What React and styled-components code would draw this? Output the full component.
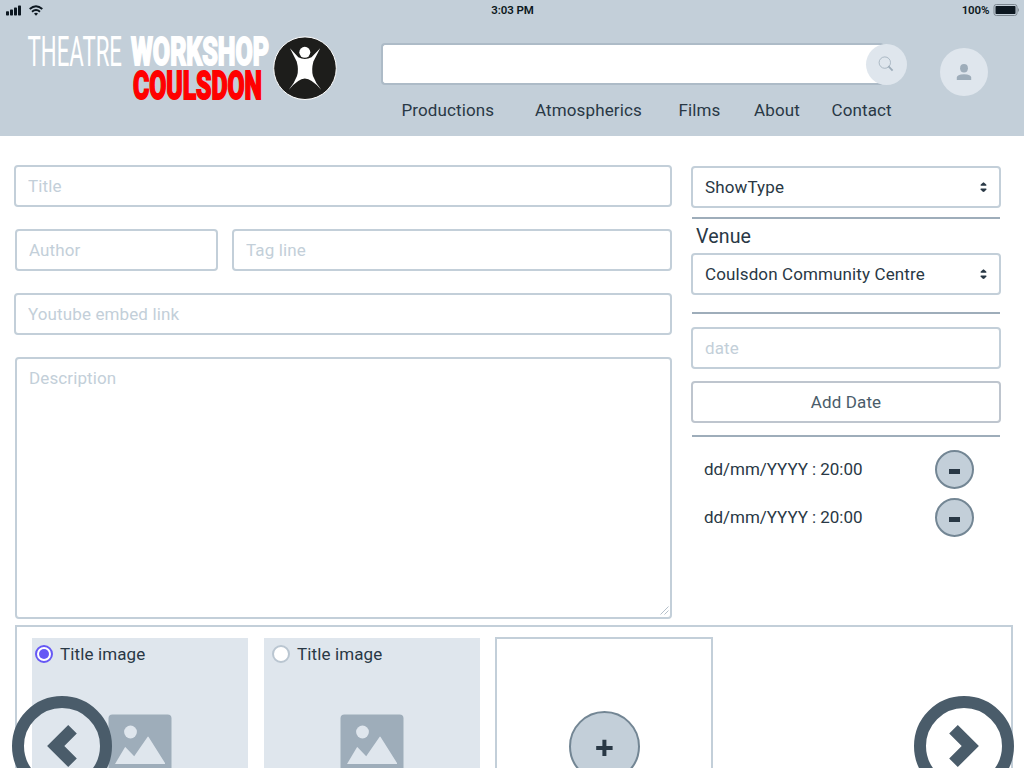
import React from "react";
import styled, { createGlobalStyle } from "styled-components";

const Global = createGlobalStyle`
  *, *::before, *::after { box-sizing: border-box; }
  body { margin: 0; background: #fff; }
  input, textarea, button { font: inherit; letter-spacing: inherit; color: inherit; }
`;

const Page = styled.div`
  width: 1024px;
  height: 768px;
  overflow: hidden;
  background: #fff;
  color: #293845;
  font: 400 17px/20px Roboto, "Liberation Sans", sans-serif;
  letter-spacing: 0.12px;
`;

const Header = styled.header`
  height: 136px;
  background: #c3cfd9;
`;

const StatusBar = styled.div`
  display: grid;
  grid-template-columns: 1fr auto 1fr;
  align-items: center;
  height: 20px;
  padding: 0 5px 0 6px;
  color: #0c1720;
  font-size: 11.5px;
  font-weight: 600;
  letter-spacing: -0.08px;
`;

const StatusGroup = styled.div`
  display: flex;
  align-items: center;
  justify-content: ${(p) => (p.$end ? "flex-end" : "flex-start")};
  gap: ${(p) => (p.$end ? 3.5 : 7)}px;
`;

const Brand = styled.div`
  display: flex;
  align-items: flex-start;
  height: 116px;
`;

const LogoSvg = styled.svg`
  display: block;
  flex: none;
  width: 381px;
  height: 116px;
`;

const SearchColumn = styled.div`
  width: 526px;
  padding-top: 23px;
`;

const SearchRow = styled.div`
  display: flex;
  align-items: center;
  height: 42px;
`;

const SearchInput = styled.input`
  width: 503px;
  height: 42px;
  padding: 0 14px;
  border: 2px solid #adbbc7;
  border-right: 0;
  border-radius: 4px;
  background: #fff;
  outline: none;
`;

const Round = styled.button`
  display: flex;
  flex: none;
  align-items: center;
  justify-content: center;
  width: ${(p) => p.$size}px;
  height: ${(p) => p.$size}px;
  padding: 0;
  border: ${(p) => (p.$outlined ? "2px solid #738694" : "0")};
  border-radius: 50%;
  background: ${(p) => (p.$outlined ? "#c3cfd9" : "#dfe6ed")};
`;

const SearchButton = styled(Round)`
  margin-left: -18px;
  padding-right: 1px;
`;

const ProfileButton = styled(Round)`
  margin: 28px 0 0 33px;
`;

const Nav = styled.nav`
  display: grid;
  grid-template-columns: 133.5px 143.5px 75.5px 77.5px auto;
  padding: 15px 0 0 20.5px;
`;

const NavLink = styled.a`
  color: #293845;
`;

const Form = styled.main`
  display: flex;
  align-items: flex-start;
  gap: 19px;
  height: 489px;
  padding: 29px 0 0 14px;
`;

const Details = styled.section`
  display: flex;
  flex-direction: column;
  gap: 22px;
  width: 658px;
`;

const FieldRow = styled.div`
  display: flex;
  gap: 14px;
  padding-left: 1px;
`;

const Input = styled.input`
  display: block;
  width: ${(p) => (p.$width ? `${p.$width}px` : "100%")};
  height: 42px;
  padding: 0 12px;
  border: 2px solid #c3cfd9;
  border-radius: 4px;
  background: #fff;
  outline: none;
  &::placeholder { color: #c3cfd9; opacity: 1; }
`;

const DescriptionBox = styled.div`
  position: relative;
  padding-left: 1px;
`;

const Description = styled.textarea`
  display: block;
  width: 100%;
  height: 262px;
  padding: 9px 12px;
  border: 2px solid #c3cfd9;
  border-radius: 4px;
  outline: none;
  resize: none;
  &::placeholder { color: #c3cfd9; opacity: 1; }
`;

const Grip = styled.svg`
  position: absolute;
  right: 3px;
  bottom: 4px;
`;

const Schedule = styled.aside`
  display: flex;
  flex-direction: column;
  width: 310px;
  padding-top: 1px;
`;

const Select = styled.div`
  display: flex;
  align-items: center;
  justify-content: space-between;
  height: 42px;
  padding: 0 12px;
  border: 2px solid #c3cfd9;
  border-radius: 4px;
`;

const Rule = styled.hr`
  width: 308px;
  height: 2px;
  margin: ${(p) => p.$top}px 1px ${(p) => p.$bottom}px;
  border: 0;
  background: #9eadba;
`;

const Venue = styled.h2`
  height: 34px;
  margin: 0;
  padding-left: 5px;
  font-size: 19.6px;
  font-weight: 400;
  line-height: 35px;
`;

const AddDate = styled.button`
  height: 42px;
  margin-top: 12px;
  border: 2px solid #bec5ce;
  border-radius: 4px;
  background: #fff;
  color: #4a5c6a;
`;

const DateRow = styled.div`
  display: flex;
  align-items: center;
  justify-content: space-between;
  height: 39px;
  margin-bottom: 9px;
  padding: 0 27px 0 13px;
  letter-spacing: -0.04px;
`;

const DateText = styled.span`
  padding-bottom: 1px;
`;

const Dash = styled.span`
  width: 11px;
  height: 5px;
  margin: 3px 1px 0 0;
  background: #293845;
`;

const Gallery = styled.section`
  position: relative;
  display: flex;
  width: 998px;
  height: 260px;
  margin-left: 15px;
  padding: 11px 0 0 15px;
  border: 2px solid #c3cfd9;
`;

const Card = styled.article`
  display: flex;
  flex-direction: column;
  align-items: center;
  width: 216px;
  height: 216px;
  margin-right: 16px;
  background: #dfe6ed;
`;

const CardLabel = styled.label`
  display: flex;
  align-items: center;
  gap: 7px;
  width: 100%;
  height: 32px;
  margin-bottom: 44px;
  padding-left: ${(p) => p.$left}px;
`;

const Radio = styled.span`
  width: 18px;
  height: 18px;
  padding: 2px;
  border: 2px solid ${(p) => (p.$on ? "#6658f5" : "#bac6d1")};
  border-radius: 50%;
  background: #fff;
  &::after {
    content: "";
    display: ${(p) => (p.$on ? "block" : "none")};
    width: 10px;
    height: 10px;
    border-radius: 50%;
    background: #6658f5;
  }
`;

const AddCard = styled.article`
  display: flex;
  align-items: flex-start;
  justify-content: center;
  width: 218px;
  height: 218px;
  margin: -1px 0 0 -1px;
  padding-top: 72px;
  border: 2px solid #c3cfd9;
`;

const Arrow = styled.button`
  position: absolute;
  top: 69px;
  left: ${(p) => p.$left}px;
  width: 100px;
  height: 100px;
  padding: 0;
  border: 0;
  background: none;
  svg { display: block; }
`;

function Logo() {
  return (
    <LogoSvg viewBox="0 20 381 116" role="img">
      <g fontFamily="Roboto, sans-serif" letterSpacing="0">
        <text x="27.5" y="66" fill="#fff" fontSize="42.2" fontWeight="400" textLength="94.5" lengthAdjust="spacingAndGlyphs">THEATRE</text>
        <text x="131" y="65.4" fill="#fff" stroke="#fff" strokeWidth="2" fontSize="39.4" fontWeight="800" textLength="138" lengthAdjust="spacingAndGlyphs">WORKSHOP</text>
        <text x="133" y="99" fill="#f00" stroke="#f00" strokeWidth="2" fontSize="39.4" fontWeight="800" textLength="129" lengthAdjust="spacingAndGlyphs">COULSDON</text>
      </g>
      <circle cx="305" cy="68.2" r="31.3" fill="#1d1d1b" stroke="#fff" strokeWidth="1" />
      <circle cx="304.8" cy="52.3" r="5.5" fill="#fff" />
      <path fill="#fff" d="M290 48.2 L298.3 57.2 Q304.8 60.6 311.5 57.2 L320.2 48.2 L313.4 61.5 Q311.2 70 313 76 Q315.5 83 321.4 90 Q311.5 78.6 304.8 78.6 Q298.5 78.6 288.6 90 Q294.5 83 297 76 Q299 70 296.7 61.5Z" />
    </LogoSvg>
  );
}

function Sorter() {
  return (
    <svg width="7" height="11" viewBox="0 0 7 11" fill="#293845">
      <path d="M3.5 .3 Q4.1 .3 6.4 2.8 Q6.8 3.8 5.8 3.8 H1.2 Q.2 3.8 .6 2.8 Q2.9 .3 3.5 .3Z" />
      <path d="M3.5 9.9 Q4.1 9.9 6.4 7.4 Q6.8 6.4 5.8 6.4 H1.2 Q.2 6.4 .6 7.4 Q2.9 9.9 3.5 9.9Z" />
    </svg>
  );
}

function ImageCard({ checked, left }) {
  return (
    <Card>
      <CardLabel $left={left}>
        <Radio $on={checked} />
        Title image
      </CardLabel>
      <svg width="64" height="64" viewBox="0 0 64 64">
        <rect x=".5" y=".5" width="63" height="63" rx="4" fill="#9eadba" />
        <g fill="#dfe6ed">
          <circle cx="22.5" cy="18" r="6.4" />
          <path d="M7 50 L16.8 33.5 Q17.3 32.6 17.8 33.5 L26.2 42.2 L39.5 23 Q40 22.2 40.6 23 L57 49 Q57.3 50 56.5 50Z" />
        </g>
      </svg>
    </Card>
  );
}

const links = ["Productions", "Atmospherics", "Films", "About", "Contact"];
const dates = ["dd/mm/YYYY : 20:00", "dd/mm/YYYY : 20:00"];

export default function App() {
  return (
    <Page>
      <Global />
      <Header>
        <StatusBar>
          <StatusGroup>
            <svg width="16" height="11" viewBox="0 0 16 11" fill="#0c1720">
              <rect x="0" y="6.2" width="3" height="4.3" rx=".7" />
              <rect x="4" y="4.5" width="3" height="6" rx=".7" />
              <rect x="8" y="2.5" width="3" height="8" rx=".7" />
              <rect x="12" y=".5" width="3" height="10" rx=".7" />
            </svg>
            <svg width="14" height="11" viewBox="0 0 14 11" fill="none" stroke="#0c1720" strokeWidth="1.9">
              <path d="M.7 4 Q7 -1.6 13.3 4" />
              <path d="M3 6.7 Q7 3.3 11 6.7" />
              <path d="M5 8.6 Q7 7 9 8.6 L7 10.8Z" fill="#0c1720" stroke="none" />
            </svg>
          </StatusGroup>
          <span>3:03 PM</span>
          <StatusGroup $end>
            <span>100%</span>
            <svg width="26" height="12" viewBox="0 0 26 12">
              <rect x="1" y=".5" width="23" height="11" rx="2.3" fill="none" stroke="#7c8790" />
              <rect x="2.5" y="2" width="20" height="8" rx=".7" fill="#0c1720" />
              <path d="M24.8 4 Q26 4.6 26 6 Q26 7.4 24.8 8Z" fill="#7c8790" />
            </svg>
          </StatusGroup>
        </StatusBar>
        <Brand>
          <Logo />
          <SearchColumn>
            <SearchRow>
              <SearchInput />
              <SearchButton $size={41}>
                <svg width="16" height="16" viewBox="0 0 16 16" fill="none" stroke="#9eadba">
                  <circle cx="6.8" cy="6.6" r="5.7" strokeWidth=".8" />
                  <path d="M10.3 10.2 L14.6 14.6" strokeWidth="1.8" />
                </svg>
              </SearchButton>
            </SearchRow>
            <Nav>
              {links.map((link) => (
                <NavLink key={link}>{link}</NavLink>
              ))}
            </Nav>
          </SearchColumn>
          <ProfileButton $size={48}>
            <svg width="16" height="16" viewBox="0 0 16 16" fill="#9eadba">
              <ellipse cx="8" cy="4.3" rx="3.9" ry="4.2" />
              <path d="M.8 16 V13.5 Q.8 10.4 8 10.2 Q15.2 10.4 15.2 13.5 V16Z" />
            </svg>
          </ProfileButton>
        </Brand>
      </Header>

      <Form>
        <Details>
          <Input placeholder="Title" />
          <FieldRow>
            <Input placeholder="Author" $width={203} />
            <Input placeholder="Tag line" $width={440} />
          </FieldRow>
          <Input placeholder="Youtube embed link" />
          <DescriptionBox>
            <Description placeholder="Description" />
            <Grip width="9" height="9" viewBox="0 0 9 9" stroke="#adb9c4" strokeWidth=".9">
              <path d="M.5 8.5 L8.5 .5 M4.5 8.5 L8.5 4.5" />
            </Grip>
          </DescriptionBox>
        </Details>

        <Schedule>
          <Select>
            ShowType
            <Sorter />
          </Select>
          <Rule $top={9} $bottom={0} />
          <Venue>Venue</Venue>
          <Select>
            Coulsdon Community Centre
            <Sorter />
          </Select>
          <Rule $top={17} $bottom={13} />
          <Input placeholder="date" />
          <AddDate>Add Date</AddDate>
          <Rule $top={12} $bottom={13} />
          {dates.map((date, i) => (
            <DateRow key={i}>
              <DateText>{date}</DateText>
              <Round $size={39} $outlined>
                <Dash />
              </Round>
            </DateRow>
          ))}
        </Schedule>
      </Form>

      <Gallery>
        <ImageCard checked left={3} />
        <ImageCard left={8} />
        <AddCard>
          <Round $size={71} $outlined>
            <svg width="17" height="19" viewBox="0 0 17 19" fill="#293845">
              <path d="M6.4 2.8h4v6.1h6.2v4h-6.2V19h-4V12.9H.2v-4h6.2Z" />
            </svg>
          </Round>
        </AddCard>
        <Arrow $left={-5}>
          <svg width="100" height="100" viewBox="0 0 100 100">
            <circle cx="50" cy="50" r="44" fill="none" stroke="#4a5c6a" strokeWidth="12" />
            <path d="M56.2 29 L64.8 37.5 L52.3 50 L64.8 62.5 L56.2 71 L35.1 50Z" fill="#4a5c6a" />
          </svg>
        </Arrow>
        <Arrow $left={897}>
          <svg width="100" height="100" viewBox="0 0 100 100">
            <circle cx="50" cy="50" r="44" fill="none" stroke="#4a5c6a" strokeWidth="12" />
            <path d="M43.8 29 L35.2 37.5 L47.7 50 L35.2 62.5 L43.8 71 L64.9 50Z" fill="#4a5c6a" />
          </svg>
        </Arrow>
      </Gallery>
    </Page>
  );
}
